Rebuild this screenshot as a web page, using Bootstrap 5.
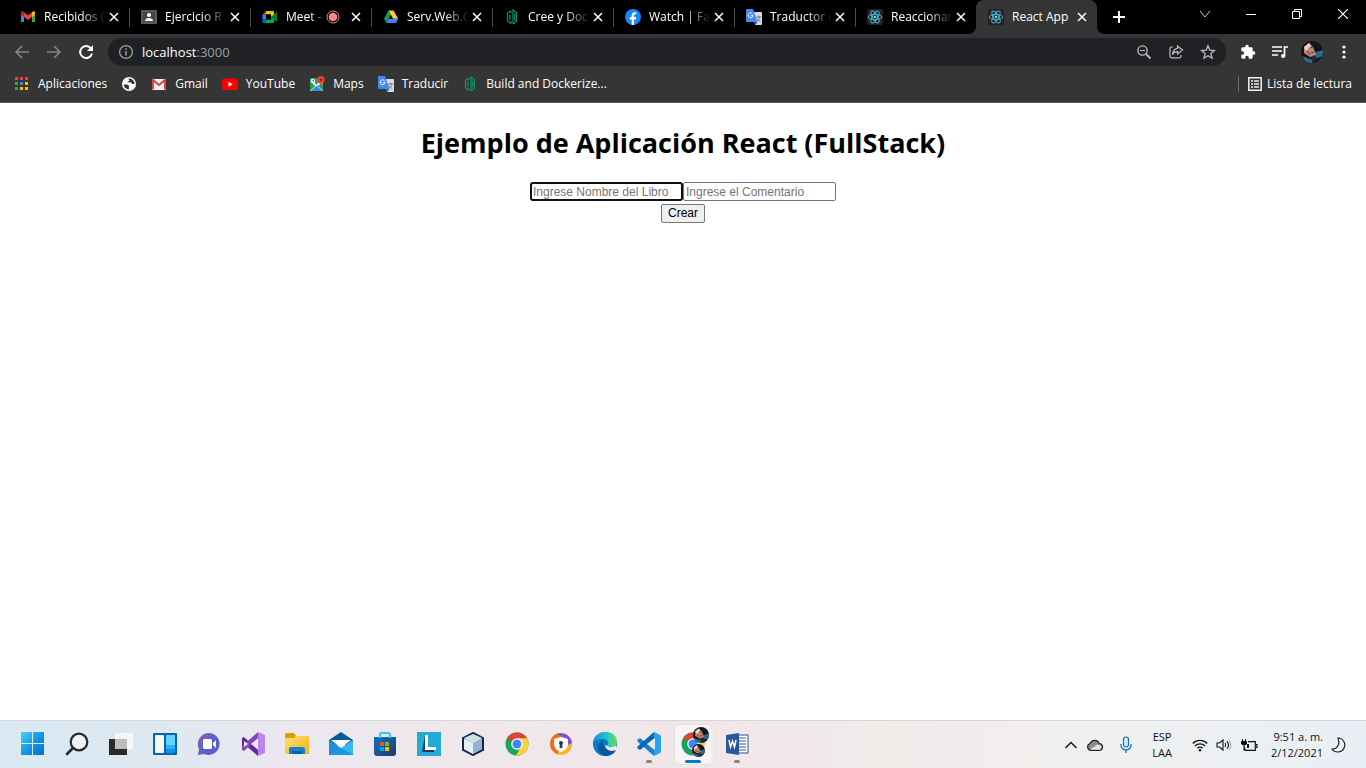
<!DOCTYPE html>
<html lang="es">
<head>
<meta charset="utf-8">
<meta name="viewport" content="width=device-width, initial-scale=1">
<title>React App</title>
<link href="https://cdn.jsdelivr.net/npm/bootstrap@5.3.0/dist/css/bootstrap.min.css" rel="stylesheet">
<style>
body{font-family:"Open Sans","Noto Sans",sans-serif;font-size:12px;line-height:16px;color:#000}
svg{display:block;flex:none}
a{color:inherit;text-decoration:none}
.bare{border:0;background:none;padding:0;color:inherit;display:flex;align-items:center;justify-content:center;flex:none}
.tabstrip{background:#000;height:34px;padding-left:8px;color:#fff}
.tab{flex:0 1 121px;min-width:0;height:34px;padding:0 7px 0 12px;position:relative}
.tab::after{content:"";position:absolute;right:-1px;top:8px;height:19px;width:1px;background:#4a4a4a}
.tab.before-current::after{display:none}
.tab.current{background:#353535;border-radius:8px 8px 0 0}
.tab.current::before,.tab.current::after{content:"";position:absolute;top:auto;bottom:0;width:8px;height:8px}
.tab.current::before{left:-8px;background:radial-gradient(circle at 0 0,transparent 8px,#353535 8px)}
.tab.current::after{right:-8px;background:radial-gradient(circle at 100% 0,transparent 8px,#353535 8px)}
.tab-link{flex:1 1 0;min-width:0;gap:8px}
.tab-title{flex:1 1 0;min-width:0;overflow:hidden;white-space:nowrap;-webkit-mask-image:linear-gradient(90deg,#000 60%,transparent);mask-image:linear-gradient(90deg,#000 60%,transparent)}
.tab.current .tab-title{-webkit-mask-image:none;mask-image:none}
.tab-close{width:16px;height:16px}
.new-tab{width:44px;height:34px}
.win-btn{width:46px;height:28px}
.toolbar{background:#353535;height:34px;color:#fff;padding:4px 12px 2px}
.nav-btn{width:20px;height:28px}
.omnibox{background:#202124;height:28px;border-radius:14px;padding:0 10px;margin:0 12px}
.address{font-size:13px;line-height:20px;color:#9aa0a6}
.tools{gap:12px}
.tools .bare{width:20px;height:22px}
.bookmarks{background:#353535;height:35px;border-bottom:1px solid #5a5a5a;color:#fff;padding:0 14px 2px;gap:14px}
.bm{gap:8px;white-space:nowrap}
.bm.reading{gap:4px}
.bm-sep{width:1px;height:16px;background:#6a6a6a}
.app-title{font-size:27px;line-height:38px;font-weight:700;margin:21px 0 20px}
.book-input{width:153px;height:19px;padding:1px 2px;border:1px solid #767676;border-radius:2px;font:12px/15px "Liberation Sans",sans-serif;color:#000}
.book-input::placeholder{color:#757575;opacity:1}
.book-input.ringed{border:2px solid #101010;border-radius:3px;padding:0 1px}
.create-btn{height:19px;width:44px;padding:0;border:1px solid #767676;border-radius:2px;background:#efefef;font:12px/15px "Liberation Sans",sans-serif;color:#000;margin-top:3px}
.taskbar{height:48px;border-top:1px solid #d6d6dc;background:linear-gradient(90deg,#d9e9f3 0,#dde8f1 10%,#ebe8ee 21%,#efe8eb 35%,#f0e6e8 50%,#f1ebea 65%,#f1f0ee 80%,#edf0f3 90%,#e8eff5 100%);padding:0 20px 0 11px;color:#111}
.task{width:44px;height:47px;position:relative;padding-bottom:1px}
.task.running::after{content:"";position:absolute;left:19px;bottom:5px;width:6px;height:3px;border-radius:2px;background:#858585}
.task.open::before{content:"";position:absolute;left:4px;top:4px;width:36px;height:39px;border-radius:4px;background:#f8f4f4;box-shadow:2px 0 0 #f1eded,0 0 0 1px #e4dede}
.task.open::after{content:"";position:absolute;left:14px;bottom:5px;width:16px;height:3px;border-radius:2px;background:#0078d4}
.task svg{position:relative}
.tray{font-size:11px;line-height:16px}
.clock{margin-left:13px}
</style>
</head>
<body class="d-flex flex-column min-vh-100 bg-white">
<svg width="0" height="0" class="position-absolute" aria-hidden="true">
<defs>
<symbol id="x" viewBox="0 0 16 16"><path d="M4 4l8 8M12 4l-8 8" stroke="#fff" stroke-width="1.500"/></symbol>
<symbol id="react" viewBox="0 0 16 16"><rect width="16" height="16" rx="2" fill="#20232a"/><g fill="none" stroke="#53b9d1" stroke-width=".9"><ellipse cx="8" cy="8" rx="6.7" ry="2.6"/><ellipse cx="8" cy="8" rx="6.7" ry="2.6" transform="rotate(60 8 8)"/><ellipse cx="8" cy="8" rx="6.7" ry="2.6" transform="rotate(120 8 8)"/></g><circle cx="8" cy="8" r="1.3" fill="#61dafb"/></symbol>
<symbol id="translate" viewBox="0 0 16 16"><path d="M7 3h8a1 1 0 0 1 1 1v11a1 1 0 0 1-1 1H9z" fill="#d9dce0"/><path d="M10 8h5M12.500 6.500V8M14 8c-.5 2-2 3.500-3.500 4.500M11 9.500c1 1.800 2 2.500 3.500 3.200" stroke="#727980" fill="none"/><path d="M1 0h6l4.500 13H1a1 1 0 0 1-1-1V1a1 1 0 0 1 1-1z" fill="#4788f4"/><path d="M8.500 13h3L9.500 16z" fill="#2962c8"/><path d="M6.500 4.800A2.400 2.400 0 1 0 7 6.700H4.800" fill="none" stroke="#fff"/></symbol>
<symbol id="docker-guide" viewBox="0 0 16 16"><g fill="none" stroke="#119464" stroke-width="1.200"><path d="M7 14.500L3.500 12V4L7 2M5.800 11V5.500"/><path d="M9 15V1l3.500 2.600v8.700L9 15M10.800 4.500v7M7 2v2M7 12v2.500"/></g></symbol>
<symbol id="chrome" viewBox="0 0 24 24"><circle cx="12" cy="12" r="11.500" fill="#1aa260"/><path d="M12 12L2 6.300A11.500 11.500 0 0 1 22 6.300z" fill="#db4437"/><path d="M22 6.300A11.500 11.500 0 0 1 11 23.500L16.500 14 12 6.300z" fill="#ffcd40"/><circle cx="12" cy="12" r="5.800" fill="#fff"/><circle cx="12" cy="12" r="4.500" fill="#4285f4"/></symbol>
<symbol id="avatar" viewBox="0 0 22 22"><clipPath id="ac"><circle cx="11" cy="11" r="11"/></clipPath><g clip-path="url(#ac)"><path fill="#141719" d="M0 0h22v22H0z"/><path d="M12 12l10-3v6l-8 3z" fill="#2b6c92"/><path d="M2 15l4 2 6 2-1 3H3z" fill="#2b6c92"/><path d="M3 6l5-4 4 4 3 7-2 4-4-1-6-4z" fill="#bd8471"/><path d="M3 6l5-4 2 3-5 5z" fill="#ebd0c4"/><path d="M6 10l3 4M9 7l3-1M10 12l3-1" stroke="#5d342f"/><path d="M9 16l5-2 3 4-5 3z" fill="#252a31"/></g></symbol>
</defs></svg>

<header>
<nav class="tabstrip d-flex align-items-center" aria-label="Pestañas">
<div class="tab d-flex align-items-center"><a href="#" class="tab-link d-flex align-items-center"><svg width="16" height="16" viewBox="0 0 16 16"><path d="M1 4v9h3V7z" fill="#4285f4"/><path d="M12 7v6h3V4z" fill="#34a853"/><path d="M1 5V3.500c0-1.200 1.300-1.500 2-1l1 .8V8L1 5.700z" fill="#c5221f"/><path d="M4 3.300l4 3 4-3V8l-4 3-4-3z" fill="#ea4335"/><path d="M12 3.300l1-.8c.8-.5 2 0 2 1v2.200L12 8z" fill="#fbbc04"/></svg><span class="tab-title">Recibidos (</span></a><button class="bare tab-close" aria-label="Cerrar"><svg width="16" height="16"><use href="#x"/></svg></button></div>
<div class="tab d-flex align-items-center"><a href="#" class="tab-link d-flex align-items-center"><svg width="16" height="16" viewBox="0 0 16 16"><path fill="#57595d" d="M0 1h16v14H0z"/><path fill="#45474b" d="M2 3h12v10H2z"/><circle cx="8" cy="6" r="2" fill="#fff"/><path d="M4 12c0-4 8-4 8 0z" fill="#fff"/></svg><span class="tab-title">Ejercicio R</span></a><button class="bare tab-close" aria-label="Cerrar"><svg width="16" height="16"><use href="#x"/></svg></button></div>
<div class="tab d-flex align-items-center"><a href="#" class="tab-link d-flex align-items-center"><svg width="16" height="16" viewBox="0 0 16 16"><path d="M4 2v3.500H.5z" fill="#ea4335"/><path d="M4 2h7q1 0 1 1v4L9 8V5.500H4z" fill="#fbbc04"/><path d="M.5 5.500H4v5H.5z" fill="#2684fc"/><path d="M.5 10.500H4V14H1.500q-1 0-1-1z" fill="#0066da"/><path d="M4 10.500h5V8l3 2v3q0 1-1 1H4z" fill="#00ac47"/><path d="M9 8l5-4.500q1-.7 1 .5v8q0 1.200-1 .5z" fill="#00832d"/><path d="M4 5.500h5v5H4z" fill="#000"/></svg><span class="tab-title">Meet -</span></a><svg width="14" height="14" viewBox="0 0 14 14" class="me-2"><circle cx="7" cy="7" r="6" fill="none" stroke="#f28b82"/><circle cx="7" cy="7" r="4.300" fill="#f28b82"/></svg><button class="bare tab-close" aria-label="Cerrar"><svg width="16" height="16"><use href="#x"/></svg></button></div>
<div class="tab d-flex align-items-center"><a href="#" class="tab-link d-flex align-items-center"><svg width="16" height="16" viewBox="0 0 16 16"><path d="M5.500 1.500L1 9.500l2 4 5-8z" fill="#0f9d58"/><path d="M5.500 1.500h5l4.700 8.300h-5z" fill="#ffcf2d"/><path d="M5.300 9.800h10L13 14H3z" fill="#3d80ed"/></svg><span class="tab-title">Serv.Web.G</span></a><button class="bare tab-close" aria-label="Cerrar"><svg width="16" height="16"><use href="#x"/></svg></button></div>
<div class="tab d-flex align-items-center"><a href="#" class="tab-link d-flex align-items-center"><svg width="16" height="16"><use href="#docker-guide"/></svg><span class="tab-title">Cree y Doc</span></a><button class="bare tab-close" aria-label="Cerrar"><svg width="16" height="16"><use href="#x"/></svg></button></div>
<div class="tab d-flex align-items-center"><a href="#" class="tab-link d-flex align-items-center"><svg width="16" height="16" viewBox="0 0 16 16"><circle cx="8" cy="8" r="8" fill="#1686f8"/><path d="M6.700 16v-5.600H4.800V8h1.900V6.400c0-2.100 1.200-3.200 3-3.200l1.500.1v2h-1c-.9 0-1.200.6-1.200 1.200V8h2.200l-.4 2.400H9V16z" fill="#fff"/></svg><span class="tab-title">Watch | Fa</span></a><button class="bare tab-close" aria-label="Cerrar"><svg width="16" height="16"><use href="#x"/></svg></button></div>
<div class="tab d-flex align-items-center"><a href="#" class="tab-link d-flex align-items-center"><svg width="16" height="16"><use href="#translate"/></svg><span class="tab-title">Traductor d</span></a><button class="bare tab-close" aria-label="Cerrar"><svg width="16" height="16"><use href="#x"/></svg></button></div>
<div class="tab before-current d-flex align-items-center"><a href="#" class="tab-link d-flex align-items-center"><svg width="16" height="16"><use href="#react"/></svg><span class="tab-title">Reaccionar</span></a><button class="bare tab-close" aria-label="Cerrar"><svg width="16" height="16"><use href="#x"/></svg></button></div>
<div class="tab current d-flex align-items-center"><a href="#" class="tab-link d-flex align-items-center"><svg width="16" height="16"><use href="#react"/></svg><span class="tab-title">React App</span></a><button class="bare tab-close" aria-label="Cerrar"><svg width="16" height="16"><use href="#x"/></svg></button></div>
<button class="bare new-tab" aria-label="Nueva pestaña"><svg width="14" height="14" viewBox="0 0 14 14"><path d="M7 1v12M1 7h12" stroke="#fff" stroke-width="2"/></svg></button>
<div class="d-flex ms-auto align-self-start">
<button class="bare win-btn" aria-label="Buscar pestañas"><svg width="12" height="12" viewBox="0 0 12 12"><path d="M1 3l5 6 5-6" fill="none" stroke="#ccc"/></svg></button>
<button class="bare win-btn" aria-label="Minimizar"><svg width="10" height="10" viewBox="0 0 10 10"><path d="M0 5.500h10" stroke="#fff"/></svg></button>
<button class="bare win-btn" aria-label="Restaurar"><svg width="10" height="10" viewBox="0 0 10 10"><path d="M.5 2.500h7v7h-7zM2.500 2.500v-2h7v7h-2" fill="none" stroke="#fff"/></svg></button>
<button class="bare win-btn" aria-label="Cerrar ventana"><svg width="10" height="10" viewBox="0 0 10 10"><path d="M0 0l10 10M10 0L0 10" stroke="#fff" stroke-width="1.200"/></svg></button>
</div>
</nav>

<div class="toolbar d-flex align-items-center">
<div class="d-flex gap-2">
<button class="bare nav-btn me-1" aria-label="Atrás"><svg width="16" height="16" viewBox="0 0 16 16"><path d="M15 8H2M8 2L2 8l6 6" fill="none" stroke="#858585" stroke-width="1.600"/></svg></button>
<button class="bare nav-btn me-1" aria-label="Adelante"><svg width="16" height="16" viewBox="0 0 16 16"><path d="M1 8h13M8 2l6 6-6 6" fill="none" stroke="#858585" stroke-width="1.600"/></svg></button>
<button class="bare nav-btn" aria-label="Recargar"><svg width="16" height="16" viewBox="0 0 16 16"><path d="M12.800 4.200A6 6 0 1 0 14 9.500" fill="none" stroke="#fff" stroke-width="2"/><path d="M15 1v6H9z" fill="#fff"/></svg></button>
</div>
<div class="omnibox d-flex align-items-center flex-grow-1">
<svg width="16" height="16" viewBox="0 0 16 16" class="me-2"><circle cx="8" cy="8" r="6.400" fill="none" stroke="#9aa0a6" stroke-width="1.300"/><path d="M8 7v4.500M8 4.200v1.500" stroke="#9aa0a6" stroke-width="1.500"/></svg>
<a href="#" class="address flex-grow-1"><span class="text-white">localhost</span>:3000</a>
<button class="bare ms-3" aria-label="Zoom"><svg width="16" height="16" viewBox="0 0 16 16"><circle cx="6.500" cy="6.500" r="4.600" fill="none" stroke="#bbb" stroke-width="1.400"/><path d="M10 10l4.500 4.500" stroke="#bbb" stroke-width="1.800"/><path d="M4 6.500h5" stroke="#bbb"/></svg></button>
<button class="bare ms-3" aria-label="Compartir"><svg width="16" height="16" viewBox="0 0 16 16"><path d="M5 3H3.500A1.500 1.500 0 0 0 2 4.500v7.800A1.500 1.500 0 0 0 3.500 13.800h8a1.500 1.500 0 0 0 1.500-1.500V11M9.500 2l5 4-5 4V7.600C7 7.500 5.500 8.500 4.500 10.500 4.800 7 6.500 4.800 9.500 4.400z" fill="none" stroke="#bbb" stroke-width="1.200"/></svg></button>
<button class="bare ms-3" aria-label="Favoritos"><svg width="16" height="16" viewBox="0 0 16 16"><path d="M8 1.800l1.800 4.300 4.700.4-3.600 3 1.100 4.700L8 11.700l-4 2.500 1.100-4.700-3.600-3 4.700-.4z" fill="none" stroke="#bbb" stroke-width="1.300"/></svg></button>
</div>
<div class="tools d-flex align-items-center">
<button class="bare" aria-label="Extensiones"><svg width="16" height="16" viewBox="0 0 24 24"><path d="M20.500 11H19V7a2 2 0 0 0-2-2h-4V3.500a2.500 2.500 0 0 0-5 0V5H4a2 2 0 0 0-2 2v3.800h1.500a2.700 2.700 0 0 1 0 5.400H2V20a2 2 0 0 0 2 2h3.800v-1.500a2.700 2.700 0 0 1 5.400 0V22H17a2 2 0 0 0 2-2v-4h1.500a2.500 2.500 0 0 0 0-5z" fill="#fff"/></svg></button>
<button class="bare" aria-label="Multimedia"><svg width="16" height="16" viewBox="0 0 16 16"><path d="M0 3h10M0 7h10M0 11h6" stroke="#fff" stroke-width="1.400"/><path d="M12.500 12V3H16" stroke="#fff" stroke-width="1.700" fill="none"/><circle cx="11.200" cy="12" r="2.100" fill="#fff"/></svg></button>
<button class="bare" aria-label="Perfil"><svg width="22" height="22"><use href="#avatar"/></svg></button>
<button class="bare" aria-label="Menú"><svg width="16" height="16" viewBox="0 0 16 16"><g fill="#fff"><circle cx="8" cy="3" r="1.600"/><circle cx="8" cy="8" r="1.600"/><circle cx="8" cy="13" r="1.600"/></g></svg></button>
</div>
</div>

<nav class="bookmarks d-flex align-items-center" aria-label="Marcadores">
<a href="#" class="bm d-flex align-items-center"><svg width="16" height="16" viewBox="0 0 16 16"><path fill="#ea4335" d="M1 1h3v3H1zM6 1h3v3H6zM11 1h3v3h-3z"/><path fill="#34a853" d="M1 6h3v3H1zM1 11h3v3H1z"/><path fill="#4285f4" d="M6 6h3v3H6z"/><path fill="#fbbc04" d="M11 6h3v3h-3zM6 11h3v3H6zM11 11h3v3h-3z"/></svg>Aplicaciones</a>
<a href="#" class="bm" aria-label="Sitio"><svg width="16" height="16" viewBox="0 0 16 16"><circle cx="8" cy="8" r="7" fill="#fff"/><path d="M2.500 8.500H6q1.500 0 2 1.500v3.500q-4.500-.5-5.500-5zM7 2.800l1.500 1.700L6 6.500h3.500q1 0 1.200 1.500H13.500q0-4-4-5.500z" fill="#353535"/><path d="M7 3L4.500 6.500l2 1h3.500v3L8 12.500" fill="none" stroke="#fff" stroke-width="1.300"/></svg></a>
<a href="#" class="bm d-flex align-items-center"><svg width="16" height="16" viewBox="0 0 16 16"><path fill="#f2f2f2" d="M1 3h14v11H1z"/><path d="M2 13.500V4l6 5 6-5v9.500" fill="none" stroke="#dc4437" stroke-width="2"/></svg>Gmail</a>
<a href="#" class="bm d-flex align-items-center"><svg width="16" height="16" viewBox="0 0 16 16"><rect y="2.500" width="16" height="11.500" rx="3" fill="#f00"/><path d="M6.500 5.700v5l4.200-2.500z" fill="#fff"/></svg>YouTube</a>
<a href="#" class="bm d-flex align-items-center"><svg width="16" height="16" viewBox="0 0 16 16"><path fill="#1da261" d="M1 2h13v13H1z"/><path d="M14 15L2 3v3l9 9z" fill="#e8e8e8"/><path d="M3 15l5-5 5 5z" fill="#4285f4"/><path d="M1 15L12 4l2 1v3L7 10l-5 5z" fill="#e8e8e8"/><path d="M3 15l5-5 5 5z" fill="#4285f4"/><circle cx="4" cy="5" r="1.800" fill="none" stroke="#fff"/><path d="M12 0a3.700 3.700 0 0 1 3.500 4c0 2.500-3 3.500-3.500 6.500C11.500 7.500 8.500 6.500 8.500 4A3.700 3.700 0 0 1 12 0z" fill="#ea4335"/><circle cx="12" cy="3.800" r="1.300" fill="#8c2018"/></svg>Maps</a>
<a href="#" class="bm d-flex align-items-center"><svg width="16" height="16"><use href="#translate"/></svg>Traducir</a>
<a href="#" class="bm d-flex align-items-center"><svg width="16" height="16"><use href="#docker-guide"/></svg>Build and Dockerize...</a>
<div class="d-flex align-items-center ms-auto">
<span class="bm-sep"></span>
<a href="#" class="bm reading d-flex align-items-center ms-2"><svg width="16" height="16" viewBox="0 0 16 16"><path d="M1.800 1.800h12.400v12.400H1.800z" fill="none" stroke="#f1f1f1" stroke-width="1.500"/><path d="M4 5h2M7 5h5M4 8h2M7 8h5M4 11h2M7 11h5" stroke="#f1f1f1" stroke-width="1.500"/></svg>Lista de lectura</a>
</div>
</nav>
</header>

<main class="flex-grow-1 d-flex flex-column align-items-center">
<h1 class="app-title">Ejemplo de Aplicación React (FullStack)</h1>
<form class="d-flex flex-column align-items-center">
<div class="d-flex"><input type="text" class="book-input ringed" placeholder="Ingrese Nombre del Libro" aria-label="Nombre del libro"><input type="text" class="book-input" placeholder="Ingrese el Comentario" aria-label="Comentario"></div>
<button type="button" class="create-btn">Crear</button>
</form>
</main>

<footer class="taskbar d-flex align-items-center">
<button class="bare task" aria-label="Inicio"><svg width="24" height="24" viewBox="0 0 24 24"><defs><linearGradient id="w" x2="1" y2="1"><stop stop-color="#4fd0fb"/><stop offset=".5" stop-color="#1398e4"/><stop offset="1" stop-color="#0070cf"/></linearGradient></defs><path d="M0 0h11v11H0zM12 0h11v11H12zM0 12h11v11H0zM12 12h11v11H12z" fill="url(#w)"/></svg></button>
<button class="bare task" aria-label="Buscar"><svg width="24" height="24" viewBox="0 0 24 24"><circle cx="14" cy="10" r="8.300" fill="#edf3f7" stroke="#292929" stroke-width="2.200"/><path d="M8 16l-6 6" stroke="#292929" stroke-width="2.600" stroke-linecap="round"/></svg></button>
<button class="bare task" aria-label="Vista de tareas"><svg width="24" height="24" viewBox="0 0 24 24"><path fill="#292929" d="M0 7h18v16H0z"/><path fill="#f6f6f6" d="M6 1h18v16H6z"/><path fill="#bcbcbc" d="M6 7h12v10H6z"/></svg></button>
<button class="bare task" aria-label="Widgets"><svg width="24" height="24" viewBox="0 0 24 24"><rect y="1" width="24" height="22" rx="1" fill="#0864b2"/><rect x="2" y="3" width="9" height="18" rx="1" fill="#f7f7f7"/><rect x="13" y="3" width="9" height="18" rx="1" fill="#0a94ec"/><path d="M13 3h9v10h-9z" fill="#62d3fc"/><path d="M13 13h9v4h-9z" fill="#31aef4"/></svg></button>
<button class="bare task" aria-label="Chat"><svg width="24" height="24" viewBox="0 0 24 24"><defs><linearGradient id="chat" x2="1" y2="1"><stop stop-color="#9a5ea5"/><stop offset=".5" stop-color="#5964c9"/><stop offset="1" stop-color="#575ad0"/></linearGradient></defs><path d="M12 1a11 11 0 1 1-5 21L1 23l1-6A11 11 0 0 1 12 1z" fill="url(#chat)"/><rect x="6" y="7" width="9" height="10" rx="1.500" fill="#fff"/><path d="M16 11l3-3v8l-3-3z" fill="#fff"/></svg></button>
<button class="bare task" aria-label="Visual Studio"><svg width="24" height="24" viewBox="0 0 24 24"><path d="M1 6l2-1 14 13V24L3 12v5l-2 1z" fill="#612b9b"/><path d="M1 18l2 1L17 6V0L1 14z" fill="#8546bf"/><path d="M17 0l7 3v18l-7 3V0z" fill="#b985ee"/><path d="M17 7l-7 5 7 5z" fill="#ebe8ee"/><path d="M3 9l4 3-4 3z" fill="#ebe8ee"/></svg></button>
<button class="bare task" aria-label="Explorador"><svg width="24" height="24" viewBox="0 0 24 24"><defs><linearGradient id="fo" x2="1" y2="1"><stop stop-color="#ffe172"/><stop offset="1" stop-color="#f5b018"/></linearGradient></defs><path d="M0 3q0-2 2-2h7l2 3h13v5H0z" fill="#d99e0b"/><path d="M0 6h9l2-2h12q1 0 1 1v17H0z" fill="url(#fo)"/><path d="M4 22v-5q0-2 2-2h12q2 0 2 2v5z" fill="#1582d1"/><path d="M7 19h10v3H7z" fill="#0861a7"/></svg></button>
<button class="bare task" aria-label="Correo"><svg width="24" height="24" viewBox="0 0 24 24"><path d="M0 8l12-8 12 8v5H0z" fill="#075899"/><path d="M2 8h20l-10 8z" fill="#fff"/><path d="M0 8l12 8v7H0z" fill="#1c91db"/><path d="M24 8L12 16 1 23h22q1 0 1-1z" fill="#39b7ef"/><path d="M12 16l12 6v1H1z" fill="#189cdf"/></svg></button>
<button class="bare task" aria-label="Microsoft Store"><svg width="24" height="24" viewBox="0 0 24 24"><defs><linearGradient id="st" x2="1" y2="1"><stop stop-color="#0874c4"/><stop offset="1" stop-color="#263a63"/></linearGradient></defs><path d="M1 5h22v16q0 3-3 3H4q-3 0-3-3z" fill="url(#st)"/><path d="M7 6V2.500Q7 1 8.500 1h7Q17 1 17 2.500V6" stroke="#3bc3f5" stroke-width="2" fill="none"/><path fill="#f25022" d="M7 10h4v4H7z"/><path fill="#7fba00" d="M12 10h4v4h-4z"/><path fill="#00a4ef" d="M7 15h4v4H7z"/><path fill="#ffb900" d="M12 15h4v4h-4z"/></svg></button>
<button class="bare task" aria-label="Aplicación L"><svg width="24" height="24" viewBox="0 0 24 24"><path fill="#24aad7" d="M0 0h24v24H0z"/><path d="M8 3l-3 17h12v-3H9z" fill="#143d61"/><path d="M8 3h3v12h8v3H8z" fill="#fff"/></svg></button>
<button class="bare task" aria-label="NetBeans"><svg width="24" height="24" viewBox="0 0 24 24"><path d="M12 1l10 5v12l-10 5-10-5V6z" fill="#9dbde0" stroke="#1b2641" stroke-width="2"/><path d="M12 2l9 4-9 5-9-5z" fill="#cee1de"/><path d="M3 7l9 4v11l-9-5z" fill="#e5edf8"/><path d="M12 11l9-4v10l-9 5z" fill="#91b1d9"/></svg></button>
<button class="bare task" aria-label="Chrome"><svg width="24" height="24"><use href="#chrome"/></svg></button>
<button class="bare task" aria-label="Navegador seguro"><svg width="24" height="24" viewBox="0 0 24 24"><circle cx="12" cy="12" r="11" fill="#f7b32b"/><path d="M1 12A11 11 0 0 1 10 1l5 5-7 5 1 11A11 11 0 0 1 1 12z" fill="#f36d20"/><path d="M8 2a11 11 0 0 1 15 9l-4 2-2-6z" fill="#7853dc"/><path d="M12 5l7 2v6q-1 5-7 7-6-2-7-7V7z" fill="#fff"/><circle cx="12" cy="11" r="2" fill="#243752"/><path d="M11 11h2l.5 5h-3z" fill="#243752"/></svg></button>
<button class="bare task" aria-label="Edge"><svg width="24" height="24" viewBox="0 0 24 24"><defs><linearGradient id="edge" x2="1"><stop stop-color="#168dd9"/><stop offset=".55" stop-color="#24c3d2"/><stop offset="1" stop-color="#65dd50"/></linearGradient></defs><circle cx="12" cy="12" r="12" fill="#087dc4"/><path d="M0 11C1-3 24-4 24 10c0 6-8 7-10 4 3-3 0-7-4-7C5 7 1 9 0 11z" fill="url(#edge)"/><path d="M10 8c-8 4-6 13 2 16 5 0 9-2 11-6-7 3-14-1-13-10z" fill="#0757a2"/><path d="M14 13.500q2 3.500 9.500 0v4.500c-5 2-12 0-11-5z" fill="#efe8ea"/></svg></button>
<button class="bare task running" aria-label="VS Code"><svg width="24" height="24" viewBox="0 0 24 24"><path d="M0 8l3-2 16 13-2 5L1 10z" fill="#1683ca"/><path d="M0 16l3 2L19 5l-2-5L1 14z" fill="#0868b5"/><path d="M17 0l6 3q1 .5 1 1v16q0 .5-1 1l-6 3z" fill="#27a4ed"/><path d="M18 6l-8 6 8 6z" fill="#efe7e8"/></svg></button>
<button class="bare task open" aria-label="Chrome, activo"><svg width="34" height="34" viewBox="0 0 34 34"><use href="#chrome" x="5" y="5" width="24" height="24"/><use href="#avatar" x="17" y="0" width="16" height="16"/><use href="#avatar" x="16" y="17" width="13" height="13"/></svg></button>
<button class="bare task running" aria-label="Word"><svg width="24" height="24" viewBox="0 0 24 24"><path d="M12 3h11v18H12z" fill="#fff" stroke="#2b579a"/><path d="M14 6h7M14 9h7M14 12h7M14 15h7M14 18h7" stroke="#2b579a"/><path d="M1 3l13-2v22L1 21z" fill="#2b579a"/><path d="M4 8l1.500 7L7.500 9l2 6L11 8" fill="none" stroke="#fff" stroke-width="1.500"/></svg></button>

<div class="tray d-flex align-items-center ms-auto">
<button class="bare me-2" aria-label="Iconos ocultos"><svg width="14" height="14" viewBox="0 0 14 14"><path d="M1.500 10L7 4.500l5.500 5.500" fill="none" stroke="#111" stroke-width="1.400"/></svg></button>
<button class="bare me-3" aria-label="OneDrive"><svg width="18" height="14" viewBox="0 0 18 14"><path d="M5 12.300A3.500 3.500 0 0 1 4 5.500c2-4.500 8-4 9 0 5 0 4.500 6.800 0 6.800z" fill="#8d8d8d" stroke="#222" stroke-width="1.200"/><path d="M4 11.700L11.500 6.500l4 1.500-1.500 3.700z" fill="#e6e6e6"/></svg></button>
<button class="bare me-3" aria-label="Micrófono"><svg width="12" height="18" viewBox="0 0 12 18"><rect x="3.500" y="1" width="5" height="10" rx="2.500" fill="#d5eaf8" stroke="#1771b8" stroke-width="1.200"/><path d="M1 8v1a5 5 0 0 0 10 0V8M6 14v3" fill="none" stroke="#1771b8" stroke-width="1.300"/></svg></button>
<button class="bare flex-column text-center ms-1 me-3" aria-label="Idioma"><span>ESP</span><span>LAA</span></button>
<button class="bare ms-1 gap-2" aria-label="Red, volumen y batería"><svg width="16" height="14" viewBox="0 0 16 14"><g fill="none" stroke="#111" stroke-width="1.200"><path d="M.8 5.500a10 10 0 0 1 14.400 0M3 8a7 7 0 0 1 10 0M5.300 10.300a4 4 0 0 1 5.400 0"/></g><circle cx="8" cy="12.300" r="1.300" fill="#111"/></svg><svg width="16" height="14" viewBox="0 0 16 14"><g fill="none" stroke="#111" stroke-width="1.100"><path d="M1 5h2.500L7 2v10L3.500 9H1zM9 5q1.500 2 0 4M11 3.300q3 3.700 0 7.400"/><path d="M13 1.800q3.700 5.200 0 10.400" stroke="#aaa"/></g></svg><svg width="18" height="14" viewBox="0 0 18 14"><path d="M8 3.700h7.300v8.600H6M16 6.500h1v3h-1" fill="none" stroke="#111" stroke-width="1.200"/><path d="M1.500 3.500h5V6q-2.500 2-5 0zM2.500 1v2M5.500 1v2M4 7v5.300h2" fill="#111" stroke="#111"/><path d="M7 6h2v4H7z" fill="#111"/></svg></button>
<button class="bare clock flex-column align-items-end" aria-label="Fecha y hora"><span>9:51 a. m.</span><span>2/12/2021</span></button>
<button class="bare ms-2" aria-label="No molestar"><svg width="15" height="16" viewBox="0 0 15 16"><path d="M7 1a7 7 0 1 1-6 11c6 0 8-5 6-11z" fill="none" stroke="#222" stroke-width="1.200"/></svg></button>
</div>
</footer>
<script src="https://cdn.jsdelivr.net/npm/bootstrap@5.3.0/dist/js/bootstrap.bundle.min.js"></script>
</body>
</html>
